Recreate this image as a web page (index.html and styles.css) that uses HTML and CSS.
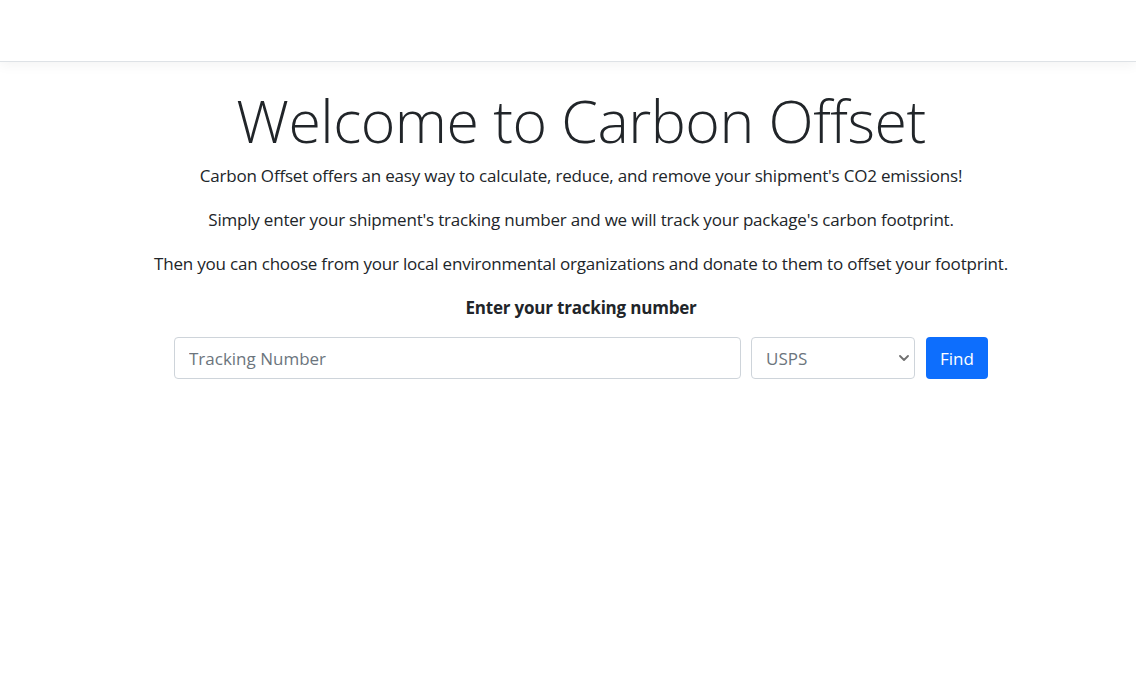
FILE: index.html
```html
<!DOCTYPE html>
<html lang="en">
<head>
<meta charset="utf-8">
<title>Carbon Offset</title>
<link rel="stylesheet" href="styles.css">
</head>
<body>
<header class="navbar"></header>
<main class="main">
  <h1 class="title">Welcome to Carbon Offset</h1>
  <p class="lead-text">Carbon Offset offers an easy way to calculate, reduce, and remove your shipment's CO2 emissions!</p>
  <p class="lead-text">Simply enter your shipment's tracking number and we will track your package's carbon footprint.</p>
  <p class="lead-text">Then you can choose from your local environmental organizations and donate to them to offset your footprint.</p>
  <p class="label">Enter your tracking number</p>
  <form class="track-form">
    <input class="field field-input" type="text" placeholder="Tracking Number">
    <div class="field field-select">
      <span class="select-value">USPS</span>
      <svg class="chevron" width="10" height="6" viewBox="0 0 10 6"><path d="M1 1l4 4 4-4" fill="none" stroke="#707070" stroke-width="1.8" stroke-linecap="round" stroke-linejoin="round"/></svg>
    </div>
    <button class="btn" type="button">Find</button>
  </form>
</main>
</body>
</html>
```

FILE: styles.css
```css
* { box-sizing: border-box; }
html, body { margin: 0; padding: 0; background: #fff; }
body {
  font-family: "Open Sans", "Noto Sans", sans-serif;
  color: #212529;
  font-size: 17px;
}
.navbar {
  height: 62px;
  background: #fff;
  border-bottom: 1px solid #dee2e6;
  box-shadow: 0 3px 12px rgba(0,0,0,0.05);
  position: relative;
}
.main {
  display: flex;
  flex-direction: column;
  align-items: center;
  padding-left: 26px;
}
.title {
  font-weight: 300;
  font-size: 59px;
  line-height: 84px;
  margin: 16px 0 0;
  letter-spacing: -0.5px;
}
.lead-text {
  margin: 0 0 17px;
  font-size: 17px;
  line-height: 27px;
  letter-spacing: -0.2px;
}
.label {
  margin: 0 0 16px;
  font-size: 17px;
  line-height: 27px;
  font-weight: 700;
  letter-spacing: -0.2px;
}
.track-form {
  display: flex;
  align-items: center;
}
.field {
  height: 42px;
  border: 1px solid #ced4da;
  border-radius: 4px;
  background: #fff;
  font-family: inherit;
  font-size: 17px;
  color: #6c757d;
  padding: 0 14px;
}
.field-input { width: 567px; outline: none; }
.field-input::placeholder { color: #6c757d; }
.field-select {
  width: 164px;
  margin-left: 10px;
  display: flex;
  align-items: center;
  justify-content: space-between;
  padding-right: 5px;
}
.chevron { display: block; }
.btn {
  margin-left: 11px;
  height: 42px;
  width: 62px;
  padding: 0;
  border: none;
  border-radius: 4px;
  background: #0d6efd;
  color: #fff;
  font-family: inherit;
  font-size: 17px;
}
```
